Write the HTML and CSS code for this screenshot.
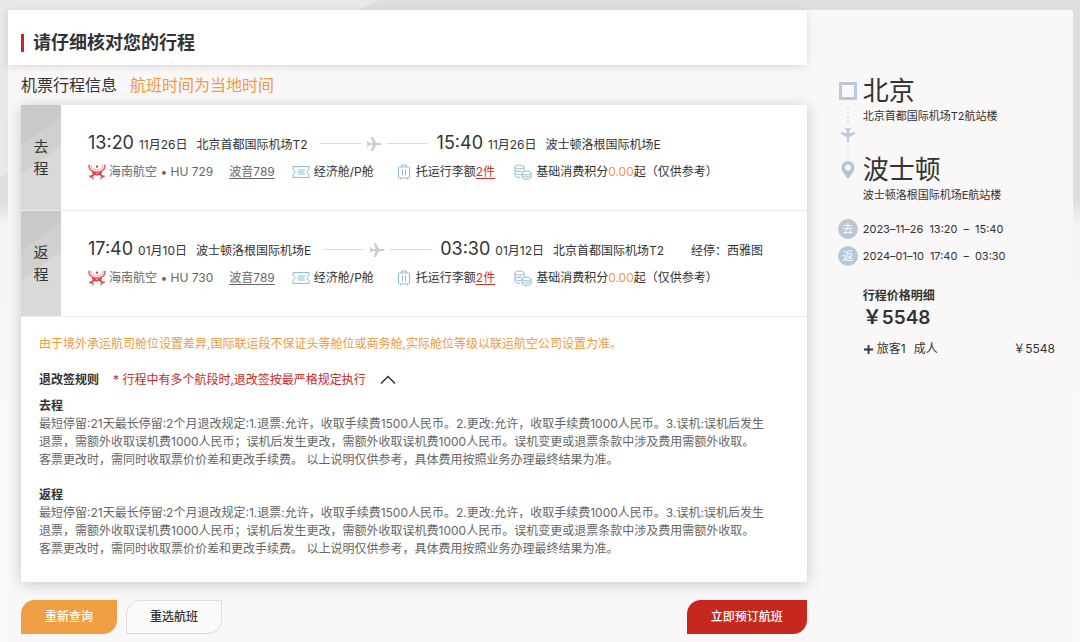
FILE: index.html
```html
<!DOCTYPE html>
<html lang="zh-CN">
<head>
<meta charset="utf-8">
<meta name="viewport" content="width=device-width, initial-scale=1">
<title>请仔细核对您的行程</title>
<link rel="stylesheet" href="styles.css">
</head>
<body>
<svg class="sprite" aria-hidden="true">
  <symbol id="plane" viewBox="0 0 16 16"><path d="M15.400 8c0-.7-.8-1.100-1.900-1.100H10.300L6.700 1H4.900l1.600 5.900H3.400L1.900 5.200H.7L1.500 8l-.8 2.800h1.200l1.500-1.700h3.100L4.900 15h1.800l3.600-5.900h3.200c1.100 0 1.900-.4 1.900-1.100z"/></symbol>
  <symbol id="hainan" viewBox="0 0 18 16">
    <g fill="none" stroke-linecap="round">
      <path d="M1.200 1.500C.5 5 4 8.200 9 8.200S17.500 5 16.800 1.500" stroke="#dd7178" stroke-width="1.800"/>
      <path d="M3.200 1C3 4 5.500 5.800 9 5.800S15 4 14.800 1" stroke="#f0bfc1" stroke-width="1.300"/>
      <path d="M4.800 8.500C7 9.200 8 10.500 9 10.500s2-1.300 4.200-2M6.500 10L3 12.800M11.500 10l3.500 2.800" stroke="#d74750" stroke-width="2"/>
      <path d="M1.500 12.200c1.500-.5 3.200.3 3.700 2.600M16.500 12.200c-1.500-.5-3.200.3-3.700 2.600" stroke="#dc5960" stroke-width="1.300"/>
    </g>
    <circle cx="9" cy="2.600" r="1.200" fill="#cf3c45"/>
  </symbol>
  <symbol id="ticket" viewBox="0 0 18 14"><path d="M1 1.500h3.200c.2 1 1.200 1 1.400 0H17v3.300c-2.600.4-2.600 4 0 4.400v3.300H5.600c-.2-1-1.200-1-1.400 0H1V9.200c2.600-.4 2.600-4 0-4.400zM6 5h7M5 7h7M6 9h7"/></symbol>
  <symbol id="luggage" viewBox="0 0 14 16"><path d="M4.500 3V1h5v2M2.500 3h9c.8 0 1 .3 1 1v9c0 .8-.3 1-1 1h-9c-.8 0-1-.3-1-1V4c0-.7.3-1 1-1zM5.500 5.500v6M8.500 5.500v6M3.500 14v1.500M10.500 14v1.500"/></symbol>
  <symbol id="coins" viewBox="0 0 18 16"><path d="M1 3c0-2.600 9-2.600 9 0s-9 2.600-9 0v8.500c0 1 1.800 1.800 5 1.900M10 3v4M1 5.800c0 1.500 3 2 6.500 1.600M1 8.600c0 1.500 2.500 2 6 1.800M8 9c0-2.400 9-2.400 9 0s-9 2.400-9 0v4.500c0 2.400 9 2.400 9 0V9M8 11.300c0 2.300 9 2.300 9 0"/></symbol>
</svg>

<div class="page">
  <main class="main">
    <header class="title-bar"><h1 class="title">请仔细核对您的行程</h1></header>

    <div class="content">
      <h2 class="section-title">机票行程信息<span class="section-note">航班时间为当地时间</span></h2>

      <div class="card">
        <section class="leg">
          <div class="leg-tag">去<br>程</div>
          <div class="leg-body">
            <div class="route">
              <span class="time">13:20</span><span class="date">11月26日</span><span class="airport">北京首都国际机场T2</span>
              <span class="track"><svg class="track-plane"><use href="#plane"/></svg></span>
              <span class="time">15:40</span><span class="date">11月26日</span><span class="airport">波士顿洛根国际机场E</span>
            </div>
            <div class="details">
              <span class="carrier"><svg class="logo"><use href="#hainan"/></svg>海南航空 • HU 729</span>
              <a class="aircraft" href="#">波音789</a>
              <span class="cabin"><svg class="icon icon-ticket"><use href="#ticket"/></svg>经济舱/P舱</span>
              <span class="baggage"><svg class="icon icon-luggage"><use href="#luggage"/></svg><span>托运行李额<a class="pieces" href="#">2件</a></span></span>
              <span class="points"><svg class="icon icon-coins"><use href="#coins"/></svg><span>基础消费积分<span class="amount">0.00</span>起（仅供参考）</span></span>
            </div>
          </div>
        </section>

        <section class="leg">
          <div class="leg-tag">返<br>程</div>
          <div class="leg-body">
            <div class="route">
              <span class="time">17:40</span><span class="date">01月10日</span><span class="airport">波士顿洛根国际机场E</span>
              <span class="track"><svg class="track-plane"><use href="#plane"/></svg></span>
              <span class="time">03:30</span><span class="date">01月12日</span><span class="airport">北京首都国际机场T2</span>
              <span class="stop">经停：西雅图</span>
            </div>
            <div class="details">
              <span class="carrier"><svg class="logo"><use href="#hainan"/></svg>海南航空 • HU 730</span>
              <a class="aircraft" href="#">波音789</a>
              <span class="cabin"><svg class="icon icon-ticket"><use href="#ticket"/></svg>经济舱/P舱</span>
              <span class="baggage"><svg class="icon icon-luggage"><use href="#luggage"/></svg><span>托运行李额<a class="pieces" href="#">2件</a></span></span>
              <span class="points"><svg class="icon icon-coins"><use href="#coins"/></svg><span>基础消费积分<span class="amount">0.00</span>起（仅供参考）</span></span>
            </div>
          </div>
        </section>

        <section class="rules">
          <p class="notice">由于境外承运航司舱位设置差异,国际联运段不保证头等舱位或商务舱,实际舱位等级以联运航空公司设置为准。</p>
          <div class="rules-head">
            <h3 class="rules-title">退改签规则</h3>
            <span class="rules-warning">* 行程中有多个航段时,退改签按最严格规定执行</span>
            <button class="toggle" type="button" aria-label="收起退改签规则" aria-expanded="true"><svg viewBox="0 0 16 10"><path d="M1 8.500l7-7 7 7"/></svg></button>
          </div>
          <h4 class="rule-name">去程</h4>
          <p class="rule-text">最短停留:21天最长停留:2个月退改规定:1.退票:允许，收取手续费1500人民币。2.更改:允许，收取手续费1000人民币。3.误机:误机后发生退票，需额外收取误机费1000人民币；误机后发生更改，需额外收取误机费1000人民币。误机变更或退票条款中涉及费用需额外收取。<br>客票更改时，需同时收取票价价差和更改手续费。 以上说明仅供参考，具体费用按照业务办理最终结果为准。</p>
          <h4 class="rule-name">返程</h4>
          <p class="rule-text">最短停留:21天最长停留:2个月退改规定:1.退票:允许，收取手续费1500人民币。2.更改:允许，收取手续费1000人民币。3.误机:误机后发生退票，需额外收取误机费1000人民币；误机后发生更改，需额外收取误机费1000人民币。误机变更或退票条款中涉及费用需额外收取。<br>客票更改时，需同时收取票价价差和更改手续费。 以上说明仅供参考，具体费用按照业务办理最终结果为准。</p>
        </section>
      </div>

      <div class="actions">
        <button class="btn btn-orange" type="button">重新查询</button>
        <button class="btn btn-plain" type="button">重选航班</button>
        <button class="btn btn-red" type="button">立即预订航班</button>
      </div>
    </div>
  </main>

  <aside class="summary">
    <div class="trip">
      <div class="trip-rail">
        <span class="origin-mark"></span>
        <span class="dots"></span>
        <svg class="rail-plane" viewBox="0 0 16 16"><use href="#plane" width="16" height="16" transform="rotate(90 8 8)"/></svg>
        <span class="dots dots-short"></span>
        <svg class="pin" viewBox="0 0 14 18"><path fill-rule="evenodd" d="M7 0a6.500 6.500 0 0 0-6.500 6.600C.5 11 7 18 7 18s6.500-7 6.500-11.400A6.500 6.500 0 0 0 7 0zm0 3.600a2.900 2.900 0 1 1 0 5.800 2.900 2.900 0 0 1 0-5.800z"/></svg>
      </div>
      <div class="trip-stops">
        <div class="city">北京</div>
        <div class="terminal">北京首都国际机场T2航站楼</div>
        <div class="city city-next">波士顿</div>
        <div class="terminal">波士顿洛根国际机场E航站楼</div>
      </div>
    </div>
    <div class="schedule"><span class="badge">去</span><span class="when"><span>2023–11–26</span><span>13:20</span><span>–</span><span>15:40</span></span></div>
    <div class="schedule"><span class="badge">返</span><span class="when"><span>2024–01–10</span><span>17:40</span><span>–</span><span>03:30</span></span></div>
    <div class="price">
      <h2 class="price-title">行程价格明细</h2>
      <div class="total">￥5548</div>
      <div class="traveller">
        <button class="expand" type="button" aria-expanded="false"><svg viewBox="0 0 12 12"><path d="M1 6h10M6 1v10"/></svg><span>旅客1</span><span>成人</span></button>
        <span>￥5548</span>
      </div>
    </div>
  </aside>
</div>
</body>
</html>
```
FILE: styles.css
```css
* { box-sizing: border-box; }

body {
  margin: 0;
  min-height: 100vh;
  padding: 10px 7px 0 8px;
  color: #333;
  font: 12px/18px Inter, "Noto Sans CJK SC", sans-serif;
  background:
    linear-gradient(155deg, #e8e8e8 0 160px, transparent 161px),
    linear-gradient(#dedede 0 200px, #f4f4f4 225px, #faf9fa 420px);
}

h1, h2, h3, h4, p { margin: 0; font-size: inherit; font-weight: inherit; }
button { font: inherit; color: inherit; padding: 0; border: 0; background: none; cursor: pointer; }
svg { display: block; flex: none; }
.sprite { position: absolute; width: 0; height: 0; }

.page {
  display: flex;
  min-height: calc(100vh - 10px);
  background: #f9f7f8;
  border-radius: 2px;
}

.main { width: 75%; }

.title-bar {
  display: flex;
  align-items: center;
  height: 55px;
  padding: 10px 13px 0;
  background: #fff;
  box-shadow: 0 2px 8px rgba(0, 0, 0, .12);
}
.title {
  padding-left: 9px;
  border-left: 3px solid #c7281d;
  font-size: 18px;
  line-height: 18px;
  font-weight: 700;
}

.content { padding-left: 13px; }
.section-title { padding: 8px 0; font-size: 16px; line-height: 24px; }
.section-note { margin-left: 13px; color: #ee9a42; }

.card { background: #fff; box-shadow: 0 2px 14px rgba(0, 0, 0, .2); }

.leg { display: flex; border-bottom: 1px solid #ebebeb; }
.leg-tag {
  display: flex;
  flex: none;
  align-items: center;
  justify-content: center;
  width: 40px;
  font-size: 15px;
  line-height: 22px;
  background: linear-gradient(145deg, #c9c9c8 0 32px, #d0d0cf 33px 56px, #d9d9d8 57px);
}
.leg-body { flex: 1; padding: 24px 0 24px 27px; white-space: nowrap; }

.route { display: flex; align-items: baseline; height: 29px; line-height: 28px; }
.time { font-size: 18px; }
.date { margin-left: 5px; }
.airport { margin-left: 9px; }
.stop { margin-left: 27px; }
.track { display: flex; align-items: center; align-self: center; gap: 5px; margin: 0 9px 0 12px; }
.track::before, .track::after { content: ""; width: 41px; height: 1px; background: #ddd; }
.track-plane { width: 16px; height: 16px; fill: #ccc; }

.details { display: flex; align-items: center; line-height: 28px; }
.carrier, .cabin, .baggage, .points { display: flex; align-items: center; }
.carrier { gap: 3px; color: #666; }
.logo { width: 18px; height: 16px; }
.aircraft { margin-left: 16px; color: #666; text-underline-offset: 2px; }
.icon { fill: none; stroke: #8bbdd3; }
.icon-ticket { width: 18px; height: 14px; }
.icon-luggage { width: 14px; height: 16px; }
.icon-coins { width: 18px; height: 16px; }
.cabin { gap: 4px; margin-left: 17px; }
.baggage { gap: 5px; margin-left: 23px; }
.points { gap: 4px; margin-left: 19px; }
.pieces { color: #d32f2a; text-underline-offset: 2px; }
.amount { color: #ee9a42; }

.rules { padding: 18px 18px 24px; }
.notice { color: #ee9a42; }
.rules-head { display: flex; align-items: center; gap: 14px; padding: 18px 0 8px; }
.rules-title, .rule-name { font-weight: 700; }
.rules-warning { color: #c7281d; }
.toggle svg { width: 16px; height: 10px; fill: none; stroke: #333; stroke-width: 1.5; }
.rule-text { color: #666; padding-right: 18px; }
.rule-text + .rule-name { margin-top: 17px; }

.actions { display: flex; gap: 9px; padding: 18px 0 7px; }
.btn { min-width: 96px; height: 34px; border-radius: 14px 0; font-weight: 500; }
.btn-orange { color: #fff; background: #ef9e44; }
.btn-plain { border: 1px solid #ddd; background: #fafafa; }
.btn-red { min-width: 120px; margin-left: auto; color: #fff; background: #c7281d; }

.summary { width: 25%; padding: 65px 18px 20px 31px; }
.trip { display: flex; gap: 5px; margin-bottom: 15px; }
.trip-rail { display: flex; flex-direction: column; align-items: center; width: 20px; padding-top: 7px; }
.origin-mark { width: 18px; height: 18px; border: 3px solid #b9c8dc; }
.dots { height: 15px; margin: 7px 0 5px; border-left: 2px dotted #dde4ed; }
.dots-short { height: 10px; margin: 4px 0; }
.rail-plane { width: 16px; height: 16px; fill: #b9c8dc; }
.pin { width: 14px; height: 18px; fill: #b3c4d6; }
.city { font-size: 26px; line-height: 32px; }
.city-next { margin-top: 29px; }
.terminal { font-size: 11px; line-height: 18px; }
.terminal, .schedule { white-space: nowrap; }
.schedule { display: flex; align-items: center; gap: 5px; margin-bottom: 7px; font-size: 11px; }
.badge { width: 20px; height: 20px; border-radius: 50%; background: #b9c7d6; color: #fff; line-height: 20px; text-align: center; }
.when { display: flex; gap: 6px; }
.price { padding: 14px 0 0 25px; }
.price-title { font-weight: 700; }
.total { font-size: 19px; line-height: 26px; font-weight: 600; }
.traveller { display: flex; justify-content: space-between; margin-top: 9px; }
.expand { display: flex; align-items: center; gap: 8px; }
.expand svg { width: 11px; height: 11px; margin-right: -5px; stroke: #333; stroke-width: 2; }
```
